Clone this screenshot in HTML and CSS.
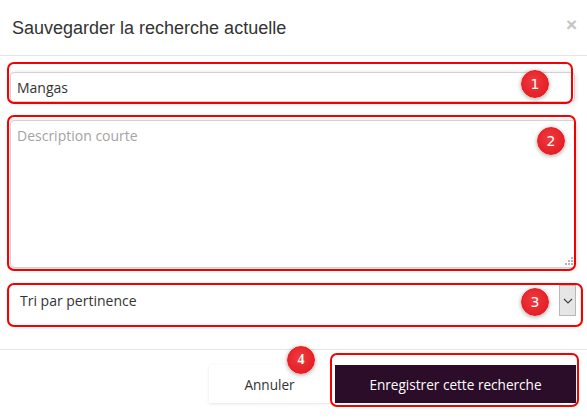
FILE: index.html
```html
<!DOCTYPE html>
<html lang="fr">
<head>
<meta charset="utf-8">
<link rel="stylesheet" href="styles.css">
</head>
<body>
<div class="modal">
  <div class="modal-header">
    <h4 class="modal-title">Sauvegarder la recherche actuelle</h4>
    <span class="close">×</span>
  </div>
  <div class="modal-body">
    <div class="group g1">
      <input class="field" type="text" value="Mangas">
      <span class="mark m1"></span>
      <span class="badge b1">1</span>
    </div>
    <div class="group g2">
      <textarea class="field area" placeholder="Description courte"></textarea>
      <svg class="grip" width="9" height="9" viewBox="0 0 9 9"><g fill="#b5b5b5"><rect x="7" y="1" width="2" height="2"/><rect x="4" y="4" width="2" height="2"/><rect x="7" y="4" width="2" height="2"/><rect x="1" y="7" width="2" height="2"/><rect x="4" y="7" width="2" height="2"/><rect x="7" y="7" width="2" height="2"/></g></svg>
      <span class="mark m2"></span>
      <span class="badge b2">2</span>
    </div>
    <div class="group g3">
      <div class="select">
        <span class="select-label">Tri par pertinence</span>
        <span class="select-arrow"><svg width="10" height="6" viewBox="0 0 10 6"><path d="M1 1l4 4 4-4" fill="none" stroke="#444" stroke-width="1.2"/></svg></span>
      </div>
      <span class="mark m3"></span>
      <span class="badge b3">3</span>
    </div>
  </div>
  <div class="modal-footer">
    <div class="btn-wrap">
      <button class="btn btn-cancel">Annuler</button>
      <span class="badge b4">4</span>
    </div>
    <div class="btn-wrap">
      <button class="btn btn-save">Enregistrer cette recherche</button>
      <span class="mark m4"></span>
    </div>
  </div>
</div>
</body>
</html>
```
FILE: styles.css
```css
html, body {
  margin: 0;
  padding: 0;
  background: #fff;
}
body {
  font-family: "Open Sans", "Liberation Sans", sans-serif;
  font-size: 14px;
  color: #333;
  width: 587px;
  height: 418px;
  overflow: hidden;
}
.modal-header {
  height: 55px;
  border-bottom: 1px solid #e5e5e5;
  display: flex;
  align-items: center;
  justify-content: space-between;
  padding: 0 10px 0 12px;
}
.modal-title {
  margin: 0;
  font-family: "Liberation Sans", Arial, sans-serif;
  font-weight: normal;
  font-size: 18px;
  color: #333;
  line-height: 20px;
  padding-top: 1px;
}
.close {
  font-family: "Liberation Sans", Arial, sans-serif;
  font-weight: bold;
  font-size: 19px;
  color: #c4c4c4;
  line-height: 1;
  margin-top: -6px;
}
.modal-body {
  padding: 16px 0 0 10px;
}
.group {
  position: relative;
}
.g1 { width: 565px; }
.g2 { width: 566px; margin-top: 18px; }
.g3 { width: 570px; margin-top: 17px; }
.field {
  display: block;
  box-sizing: border-box;
  width: 100%;
  margin: 0;
  border: 1px solid #d2d2d2;
  border-radius: 4px;
  background: #fff;
  box-shadow: 0 1px 5px rgba(0,0,0,0.18);
  font-family: "Open Sans", sans-serif;
  font-size: 14px;
  color: #333;
  padding: 0 6px;
  outline: none;
}
.g1 .field { height: 30px; }
.area {
  height: 148px;
  padding: 5px 6px;
  resize: none;
  line-height: 20px;
}
.area::placeholder { color: #a3a3a3; }
.grip {
  position: absolute;
  right: 3px;
  bottom: 3px;
}
.select {
  box-sizing: border-box;
  height: 40px;
  border-radius: 4px;
  background: #fff;
  box-shadow: 0 1px 5px rgba(0,0,0,0.18);
  display: flex;
  align-items: flex-start;
  justify-content: space-between;
  padding: 0 4px 0 10px;
}
.select-label {
  line-height: 31px;
  color: #333;
}
.select-arrow {
  box-sizing: border-box;
  width: 17px;
  height: 31px;
  background: #e6e6e6;
  border: 1px solid #b8b8b8;
  display: flex;
  align-items: center;
  justify-content: center;
}
.mark {
  position: absolute;
  box-sizing: border-box;
  border: 2px solid #f50000;
  border-radius: 7px;
  pointer-events: none;
}
.m1 { left: -3px; top: -10px; width: 566px; height: 42px; }
.m2 { left: -3px; top: -5px; width: 569px; height: 156px; }
.m3 { left: -3px; top: -2px; width: 576px; height: 44px; }
.m4 { left: -5px; top: -12px; width: 249px; height: 54px; }
.badge {
  position: absolute;
  width: 28px;
  height: 28px;
  border-radius: 50%;
  background: radial-gradient(circle at 45% 40%, #ee3a3f 0%, #e4252b 60%, #d81c22 100%);
  border: 1px solid #f21818;
  box-sizing: border-box;
  box-shadow: 0 1px 4px rgba(0,0,0,0.35);
  color: #fff;
  font-family: "DejaVu Sans", sans-serif;
  font-size: 14px;
  line-height: 26px;
  text-align: center;
}
.b1 { left: 511px; top: -2px; }
.b2 { left: 527px; top: 7px; }
.b3 { left: 511px; top: 3px; }
.b4 { left: 78px; top: -19px; font-family: "Liberation Serif", serif; font-weight: bold; }
.modal-footer {
  margin-top: 24px;
  border-top: 1px solid #e5e5e5;
  display: flex;
  justify-content: flex-end;
  gap: 5px;
  padding: 15px 11px 0 0;
}
.btn-wrap {
  position: relative;
}
.btn {
  display: block;
  height: 38px;
  border: 0;
  margin: 0;
  font-family: "Open Sans", sans-serif;
  font-size: 13.6px;
  cursor: pointer;
}
.btn-cancel {
  width: 121px;
  background: #fff;
  color: #333;
  box-shadow: 0 1px 3px rgba(0,0,0,0.1);
}
.btn-save {
  width: 241px;
  background: #2b0c29;
  color: #fff;
}
```
